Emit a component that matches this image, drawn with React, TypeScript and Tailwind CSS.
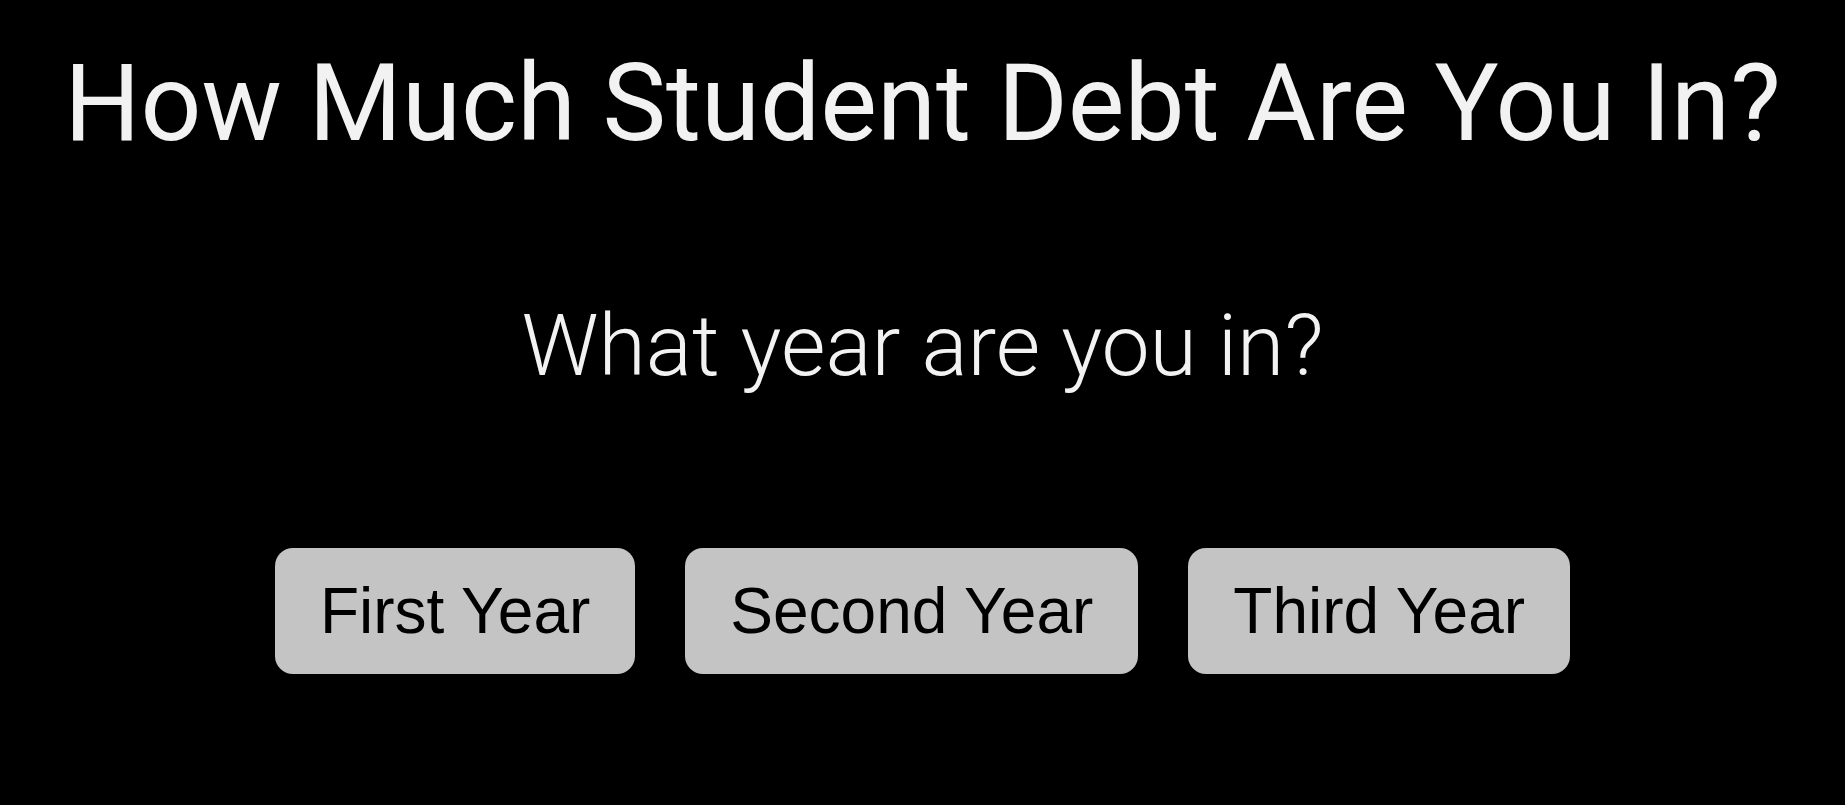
export default function App() {
  const years = ["First Year", "Second Year", "Third Year"];
  return (
    <div className="min-h-screen w-full bg-black flex flex-col items-center pt-[41px]">
      <h1 className="font-['Roboto',sans-serif] text-[107px] leading-[125px] font-normal text-[#f2f2f2] whitespace-nowrap">
        How Much Student Debt Are You In?
      </h1>
      <h2 className="mt-[129px] font-['Roboto',sans-serif] text-[86px] leading-[101px] font-light text-[#f2f2f2] whitespace-nowrap">
        What year are you in?
      </h2>
      <div className="mt-[152px] flex gap-[50px]">
        {years.map((y) => (
          <button
            key={y}
            className="h-[126px] px-[45px] rounded-[18px] bg-[#c4c4c4] text-black font-['Liberation_Sans',Arial,sans-serif] text-[64px] leading-[74px]"
          >
            {y}
          </button>
        ))}
      </div>
    </div>
  );
}
